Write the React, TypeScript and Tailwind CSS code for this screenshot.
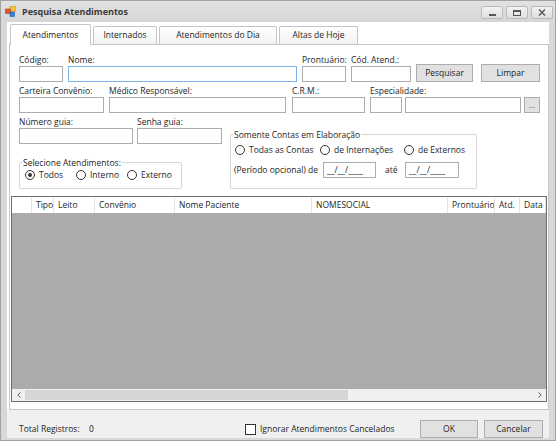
import type { ReactNode } from 'react';

// Campos e controles do formulário "Pesquisa Atendimentos"

function Label({ children }: { children?: ReactNode }) {
  return <div className="h-[13px] leading-[13px] whitespace-nowrap">{children}</div>;
}

function Field({ label, width, focused }: { label?: string; width: string; focused?: boolean }) {
  return (
    <div className={`flex flex-col shrink-0 ${width}`}>
      <Label>{label}</Label>
      <div
        className={`h-[16px] bg-white border ${focused ? 'border-[#7eb4ea]' : 'border-[#abadb3]'}`}
      />
    </div>
  );
}

function Btn({ children, className }: { children: ReactNode; className: string }) {
  return (
    <div
      className={`flex items-center justify-center shrink-0 bg-[#e1e1e1] border border-[#adadad] ${className}`}
    >
      {children}
    </div>
  );
}

function Radio({ label, checked, className }: { label: string; checked?: boolean; className?: string }) {
  return (
    <div className={`flex items-center shrink-0 ${className ?? ''}`}>
      <span className="w-[10px] h-[10px] rounded-full border border-[#333333] bg-white flex items-center justify-center">
        {checked && <span className="w-[4px] h-[4px] rounded-full bg-[#333333]" />}
      </span>
      <span className="ml-[4px] whitespace-nowrap">{label}</span>
    </div>
  );
}

function DateBox({ width }: { width: string }) {
  return (
    <div className={`h-[16px] bg-white border border-[#abadb3] pl-[3px] leading-[14px] ${width}`}>
      __/__/____
    </div>
  );
}

function TitleButton({ children }: { children: ReactNode }) {
  return (
    <div className="w-[22px] h-[13px] rounded-[2px] border border-[#b9b9b9] bg-linear-to-b from-[#f2f2f2] to-[#dedede] flex items-center justify-center">
      {children}
    </div>
  );
}

const tabs = [
  { label: 'Atendimentos', w: 'w-[81px]', active: true },
  { label: 'Internados', w: 'w-[64px]' },
  { label: 'Atendimentos do Dia', w: 'w-[118px]' },
  { label: 'Altas de Hoje', w: 'w-[79px]' },
];

const columns = [
  { label: '', w: 'w-[20px]' },
  { label: 'Tipo', w: 'w-[22px]' },
  { label: 'Leito', w: 'w-[41px]' },
  { label: 'Convênio', w: 'w-[80px]' },
  { label: 'Nome Paciente', w: 'w-[137px]' },
  { label: 'NOMESOCIAL', w: 'w-[136px]' },
  { label: 'Prontuário', w: 'w-[47px]' },
  { label: 'Atd.', w: 'w-[25px]' },
  { label: 'Data', w: 'w-[26px]' },
];

export default function App() {
  return (
    <div className="w-[556px] h-[441px] flex flex-col border border-[#a3a3a3] bg-[#d8d8d8] text-[8.5px] text-[#1e1e1e] font-['Segoe_UI','Open_Sans',sans-serif] overflow-hidden">
      {/* barra de título */}
      <div className="h-[21px] shrink-0 flex items-center pl-[4px] pr-[2px] bg-linear-to-b from-[#e2e2e2] to-[#d6d6d6]">
        <svg width="11" height="11" viewBox="0 0 11 11">
          <rect x="5" y="0.5" width="5.5" height="5" fill="#f4c238" stroke="#c99a1c" strokeWidth="0.6" />
          <rect x="0.5" y="3" width="5" height="4.5" fill="#e4572e" stroke="#b2391a" strokeWidth="0.6" />
          <rect x="5" y="6" width="4.5" height="4.5" fill="#3a7fd5" stroke="#245ea8" strokeWidth="0.6" />
        </svg>
        <span className="ml-[6px] font-bold text-[9px] text-[#3a3a3a]">Pesquisa Atendimentos</span>
        <div className="ml-auto flex items-center gap-[3px] mt-[2px]">
          <TitleButton>
            <span className="w-[7px] h-[2px] bg-[#555555] mt-[5px]" />
          </TitleButton>
          <TitleButton>
            <span className="w-[8px] h-[6px] border border-[#555555] border-t-2" />
          </TitleButton>
          <TitleButton>
            <svg width="8" height="7" viewBox="0 0 8 7">
              <path d="M1 0.5 L7 6.5 M7 0.5 L1 6.5" stroke="#555555" strokeWidth="1.4" />
            </svg>
          </TitleButton>
        </div>
      </div>

      <div className="flex-1 flex flex-col px-[6px] pb-[2px]">
        <div className="flex-1 flex flex-col bg-white">
          {/* abas */}
          <div className="h-[22px] shrink-0 flex items-end gap-[2px] pl-[3px]">
            {tabs.map((t) =>
              t.active ? (
                <div
                  key={t.label}
                  className={`${t.w} h-[21px] -mb-[1px] relative z-10 bg-white border border-b-0 border-[#c5c5c5] rounded-t-[2px] flex items-center justify-center`}
                >
                  {t.label}
                </div>
              ) : (
                <div
                  key={t.label}
                  className={`${t.w} h-[18px] bg-linear-to-b from-white to-[#f2f2f2] border border-b-0 border-[#c5c5c5] rounded-t-[2px] flex items-center justify-center`}
                >
                  {t.label}
                </div>
              ),
            )}
          </div>

          {/* página da aba */}
          <div className="ml-[2px] w-[540px] h-[366px] shrink-0 border border-[#c5c5c5] bg-white flex flex-col">
            <div className="mt-[8px] pl-[9px] flex items-end">
              <Field label="Código:" width="w-[44px]" />
              <div className="ml-[5px]">
                <Field label="Nome:" width="w-[229px]" focused />
              </div>
              <div className="ml-[5px]">
                <Field label="Prontuário:" width="w-[44px]" />
              </div>
              <div className="ml-[5px]">
                <Field label="Cód. Atend.:" width="w-[60px]" />
              </div>
              <Btn className="ml-[5px] w-[57px] h-[18px]">Pesquisar</Btn>
              <Btn className="ml-[8px] w-[59px] h-[18px]">Limpar</Btn>
            </div>

            <div className="mt-[2px] pl-[9px] flex items-end">
              <Field label="Carteira Convênio:" width="w-[85px]" />
              <div className="ml-[5px]">
                <Field label="Médico Responsável:" width="w-[177px]" />
              </div>
              <div className="ml-[6px]">
                <Field label="C.R.M.:" width="w-[73px]" />
              </div>
              <div className="ml-[5px]">
                <Field label="Especialidade:" width="w-[32px]" />
              </div>
              <div className="ml-[3px] w-[116px] h-[16px] bg-white border border-[#abadb3]" />
              <Btn className="ml-[3px] w-[16px] h-[16px] text-[#666666] leading-none">...</Btn>
            </div>

            <div className="mt-[2px] pl-[9px] flex items-start">
              <div className="flex flex-col">
                <div className="flex">
                  <Field label="Número guia:" width="w-[114px]" />
                  <div className="ml-[4px]">
                    <Field label="Senha guia:" width="w-[85px]" />
                  </div>
                </div>
                <fieldset className="mt-[12px] w-[163px] h-[33px] border border-[#d5d5d5] rounded-[2px] pl-[5px]">
                  <legend className="-ml-[3px] px-[1px] leading-[13px]">Selecione Atendimentos:</legend>
                  <div className="flex items-center h-[10px] mt-[1px] leading-[10px]">
                    <Radio label="Todos" checked className="w-[51px]" />
                    <Radio label="Interno" className="w-[51px]" />
                    <Radio label="Externo" />
                  </div>
                </fieldset>
              </div>

              <fieldset className="ml-[8px] mt-[13px] w-[247px] h-[61px] border border-[#d5d5d5] rounded-[2px] pl-[4px]">
                <legend className="-ml-[2px] px-[1px] leading-[13px]">Somente Contas em Elaboração</legend>
                <div className="mt-[2px] h-[14px] flex items-center">
                  <Radio label="Todas as Contas" className="w-[85px]" />
                  <Radio label="de Internações" className="w-[84px]" />
                  <Radio label="de Externos" />
                </div>
                <div className="mt-[5px] h-[16px] flex items-center">
                  <span className="w-[89px] -ml-[1px] whitespace-nowrap">(Período opcional) de</span>
                  <DateBox width="w-[53px]" />
                  <span className="ml-[9px] w-[20px]">até</span>
                  <DateBox width="w-[54px]" />
                </div>
              </fieldset>
            </div>

            {/* grade de atendimentos */}
            <div className="mt-[7px] mx-[1px] h-[206px] shrink-0 border border-[#6d6d6d] bg-[#ababab] flex flex-col overflow-hidden">
              <div className="h-[16px] shrink-0 bg-white flex overflow-hidden">
                {columns.map((c, i) => (
                  <div
                    key={i}
                    className={`${c.w} shrink-0 border-r border-[#e2e2e2] pl-[4px] leading-[16px] whitespace-nowrap overflow-hidden`}
                  >
                    {c.label}
                  </div>
                ))}
              </div>
              <div className="flex-1" />
              <div className="h-[12px] shrink-0 bg-[#f0f0f0] flex items-center">
                <div className="w-[13px] h-full flex items-center justify-center">
                  <svg width="4" height="6" viewBox="0 0 4 6">
                    <path d="M3.5 0.5 L0.8 3 L3.5 5.5" fill="none" stroke="#606060" strokeWidth="1" />
                  </svg>
                </div>
                <div className="w-[323px] h-[10px] bg-[#d6d6d6]" />
                <div className="flex-1" />
                <div className="w-[13px] h-full flex items-center justify-center">
                  <svg width="4" height="6" viewBox="0 0 4 6">
                    <path d="M0.5 0.5 L3.2 3 L0.5 5.5" fill="none" stroke="#606060" strokeWidth="1" />
                  </svg>
                </div>
              </div>
            </div>
          </div>

          {/* rodapé */}
          <div className="flex-1 bg-[#f0f0f0] flex items-start pt-[10px] pl-[12px] pr-[6px]">
            <span className="w-[70px] leading-[18px] whitespace-nowrap">Total Registros:</span>
            <span className="w-[156px] leading-[18px]">0</span>
            <div className="h-[18px] flex items-center">
              <span className="w-[11px] h-[11px] border border-[#333333] bg-white" />
              <span className="ml-[4px] whitespace-nowrap">Ignorar Atendimentos Cancelados</span>
            </div>
            <Btn className="ml-auto w-[58px] h-[18px]">OK</Btn>
            <Btn className="ml-[6px] w-[59px] h-[18px]">Cancelar</Btn>
          </div>
        </div>
      </div>
    </div>
  );
}
